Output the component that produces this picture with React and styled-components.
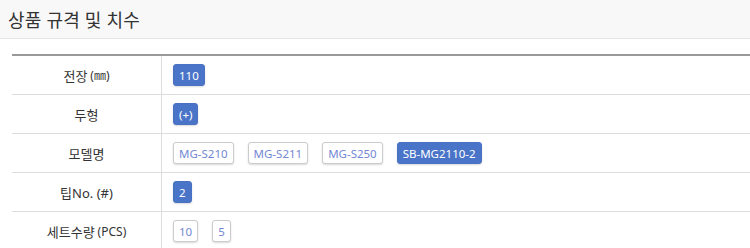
import React from "react";
import styled, { createGlobalStyle } from "styled-components";

const GlobalStyle = createGlobalStyle`
  html, body {
    margin: 0;
    padding: 0;
    background: #ffffff;
    font-family: "Noto Sans", "Noto Sans CJK KR", sans-serif;
    color: #333333;
  }
`;

const specs = [
  { label: "전장", unit: "(㎜)", items: ["110"], active: [0] },
  { label: "두형", items: ["(+)"], active: [0] },
  {
    label: "모델명",
    items: ["MG-S210", "MG-S211", "MG-S250", "SB-MG2110-2"],
    active: [3],
  },
  { label: "팁No. (#)", items: ["2"], active: [0] },
  { label: "세트수량", unit: "(PCS)", items: ["10", "5"], active: [] },
];

const App = () => {
  return (
    <Page>
      <GlobalStyle />
      <Header>
        <h3>상품 규격 및 치수</h3>
      </Header>
      <Table>
        {specs.map((row) => (
          <Row key={row.label}>
            <Label>
              {row.label}
              {row.unit && <small> {row.unit}</small>}
            </Label>
            <Values>
              {row.items.map((item, i) => (
                <Chip key={item} $active={row.active.includes(i)}>
                  {item}
                </Chip>
              ))}
            </Values>
          </Row>
        ))}
      </Table>
    </Page>
  );
};

export default App;

const Page = styled.div`
  width: 750px;
  height: 248px;
  overflow: hidden;
`;

const Header = styled.div`
  height: 38px;
  background: #f8f8f8;
  border-bottom: 1px solid #e5e5e5;
  display: flex;
  align-items: center;
  padding: 0 8px;

  h3 {
    margin: 0;
    font-size: 18px;
    font-weight: 400;
    color: #333;
    letter-spacing: 0.2px;
  }
`;

const Table = styled.div`
  margin: 15px 0 0 12px;
  border-top: 2px solid #999999;
`;

const Row = styled.div`
  display: grid;
  grid-template-columns: 150px 1fr;
  height: 38px;
  border-bottom: 1px solid #dddddd;
`;

const Label = styled.div`
  display: flex;
  align-items: center;
  justify-content: center;
  border-right: 1px solid #dddddd;
  font-size: 13px;
  color: #333;

  small {
    font-size: 12px;
    margin-left: 3px;
  }
`;

const Values = styled.div`
  display: flex;
  align-items: center;
  gap: 14px;
  padding-left: 11px;
`;

const Chip = styled.span`
  display: inline-flex;
  align-items: center;
  height: 22px;
  padding: 0 5px;
  box-sizing: border-box;
  font-size: 11.5px;
  border-radius: 3px;
  border: 1px solid ${(p) => (p.$active ? "#4a72c4" : "#cccccc")};
  background: ${(p) => (p.$active ? "#4a74c8" : "#ffffff")};
  color: ${(p) => (p.$active ? "#ffffff" : "#7388d4")};
  box-shadow: 0 1px 2px rgba(0, 0, 0, 0.15);
`;
